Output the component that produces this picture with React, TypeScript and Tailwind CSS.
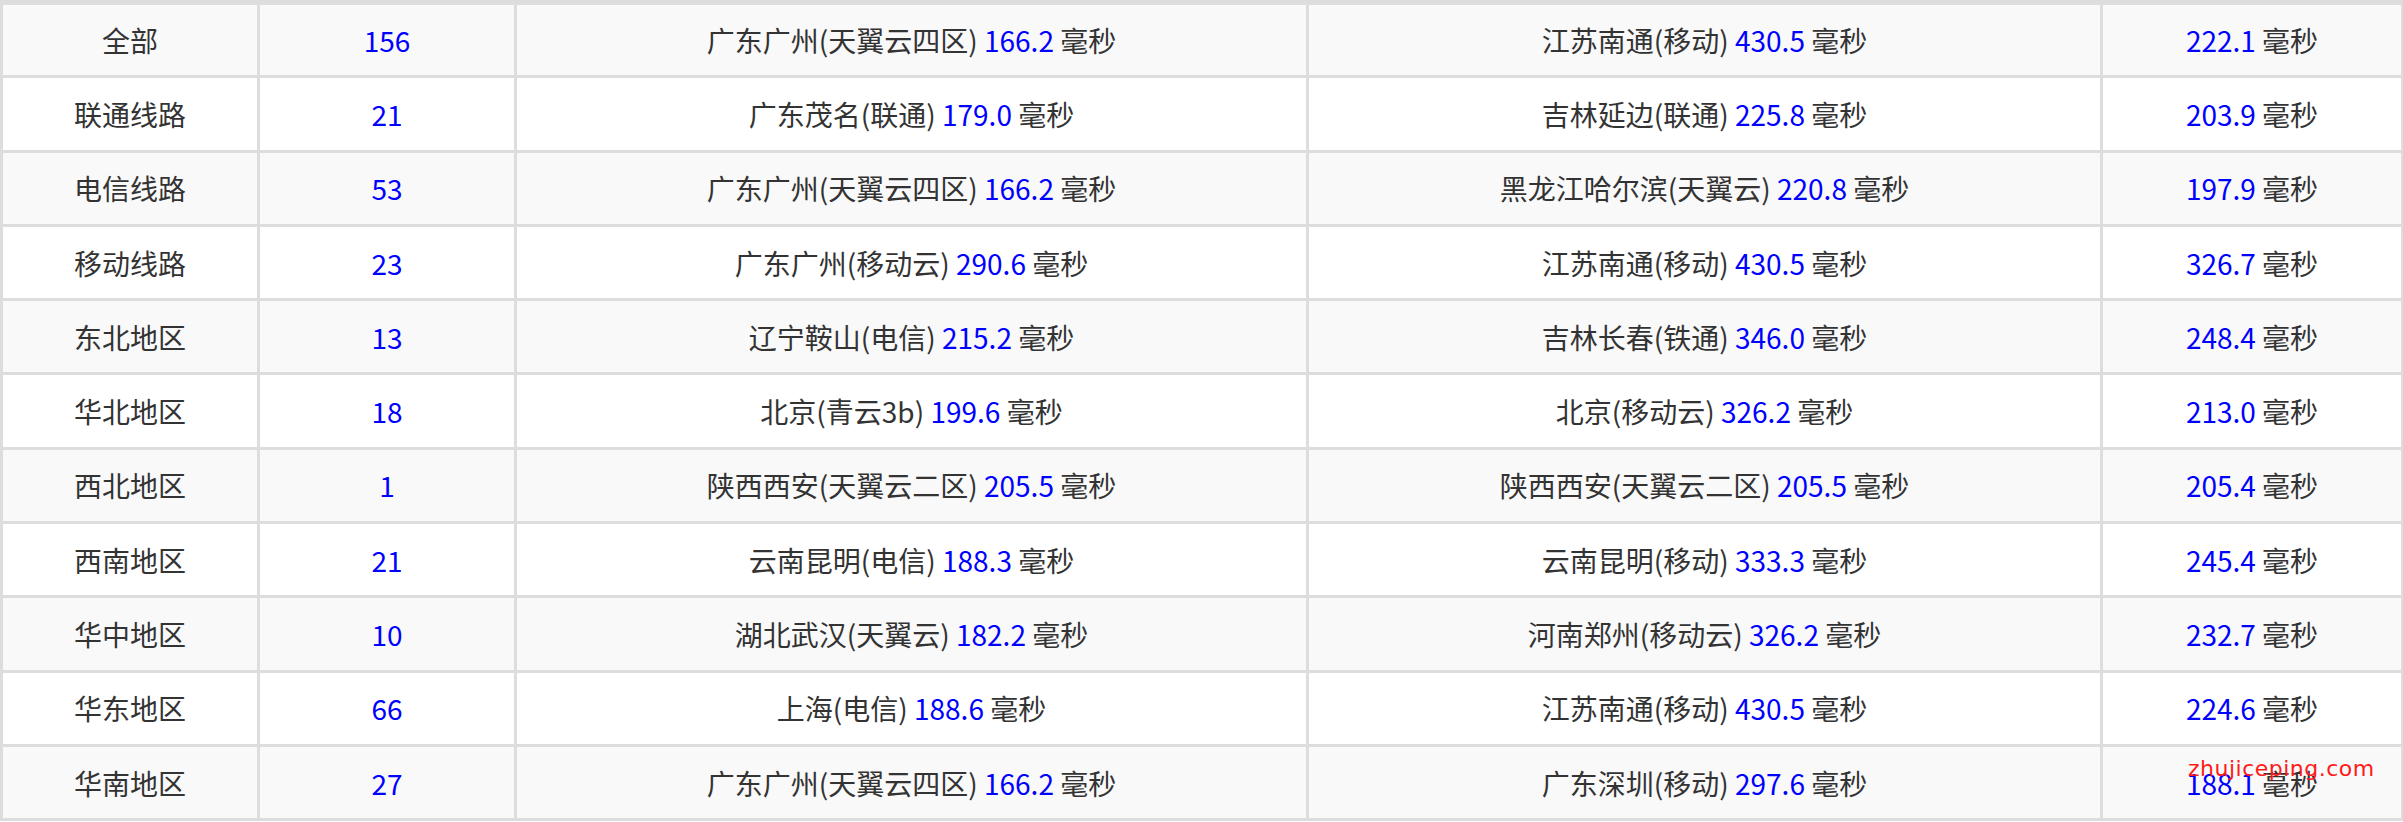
const rows: [string, string, string, string, string, string, string][] = [
  ["全部", "156", "广东广州(天翼云四区)", "166.2", "江苏南通(移动)", "430.5", "222.1"],
  ["联通线路", "21", "广东茂名(联通)", "179.0", "吉林延边(联通)", "225.8", "203.9"],
  ["电信线路", "53", "广东广州(天翼云四区)", "166.2", "黑龙江哈尔滨(天翼云)", "220.8", "197.9"],
  ["移动线路", "23", "广东广州(移动云)", "290.6", "江苏南通(移动)", "430.5", "326.7"],
  ["东北地区", "13", "辽宁鞍山(电信)", "215.2", "吉林长春(铁通)", "346.0", "248.4"],
  ["华北地区", "18", "北京(青云3b)", "199.6", "北京(移动云)", "326.2", "213.0"],
  ["西北地区", "1", "陕西西安(天翼云二区)", "205.5", "陕西西安(天翼云二区)", "205.5", "205.4"],
  ["西南地区", "21", "云南昆明(电信)", "188.3", "云南昆明(移动)", "333.3", "245.4"],
  ["华中地区", "10", "湖北武汉(天翼云)", "182.2", "河南郑州(移动云)", "326.2", "232.7"],
  ["华东地区", "66", "上海(电信)", "188.6", "江苏南通(移动)", "430.5", "224.6"],
  ["华南地区", "27", "广东广州(天翼云四区)", "166.2", "广东深圳(移动)", "297.6", "188.1"],
];

const B = "text-[#0000ff]";

export default function App() {
  return (
    <div className="relative w-[2403px] h-[822px] bg-white text-[#333] text-[28px]" style={{ fontFamily: '"Noto Sans CJK SC", "Noto Sans", sans-serif' }}>
      <table className="border-collapse table-fixed w-[2401px] border-t-[5px] border-[#ddd]">
        <colgroup>
          <col className="w-[257px]" />
          <col className="w-[257px]" />
          <col className="w-[792px]" />
          <col className="w-[794px]" />
          <col className="w-[301px]" />
        </colgroup>
        <tbody>
          {rows.map((r, i) => (
            <tr key={i} className={`h-[74.3px] ${i % 2 === 0 ? "bg-[#f9f9f9]" : "bg-white"}`}>
              <td className="border-[3px] border-[#ddd] text-center">{r[0]}</td>
              <td className={`border-[3px] border-[#ddd] text-center ${B}`}>{r[1]}</td>
              <td className="border-[3px] border-[#ddd] text-center">{r[2]} <span className={B}>{r[3]}</span> 毫秒</td>
              <td className="border-[3px] border-[#ddd] text-center">{r[4]} <span className={B}>{r[5]}</span> 毫秒</td>
              <td className="border-[3px] border-[#ddd] text-center"><span className={B}>{r[6]}</span> 毫秒</td>
            </tr>
          ))}
        </tbody>
      </table>
      <div className="absolute left-[2188px] top-[752px] text-[22px] text-[#ff1a1a] tracking-[0.5px]" style={{ fontFamily: '"DejaVu Sans", sans-serif' }}>zhujiceping.com</div>
    </div>
  );
}
